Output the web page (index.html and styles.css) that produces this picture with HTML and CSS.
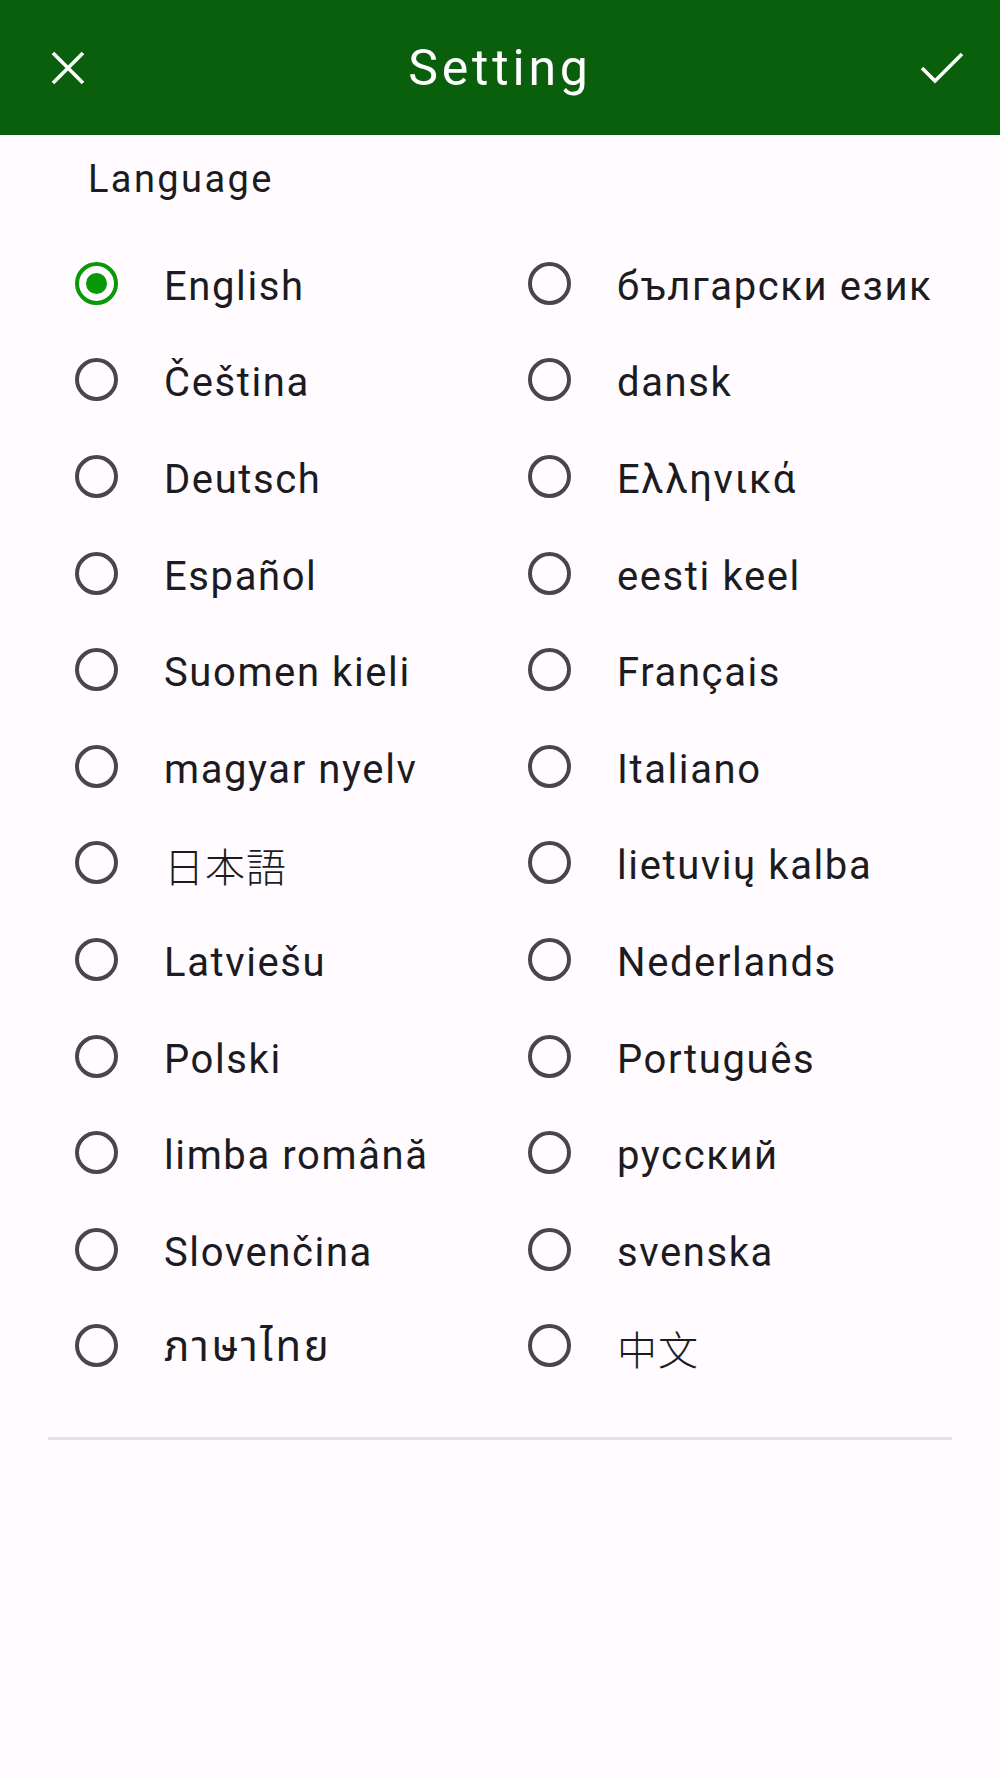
FILE: index.html
```html
<!DOCTYPE html>
<html lang="en">
<head>
<meta charset="utf-8">
<title>Setting</title>
<link rel="stylesheet" href="styles.css">
</head>
<body>
<header class="appbar">
  <button class="icon-btn close" aria-label="Close">
    <svg viewBox="0 0 34 34" width="34" height="34"><path d="M2 2 L32 32 M32 2 L2 32" stroke="#fff" stroke-width="3.6" fill="none"/></svg>
  </button>
  <h1 class="title">Setting</h1>
  <button class="icon-btn ok" aria-label="Save">
    <svg viewBox="0 0 44 34" width="44" height="34"><path d="M2 17 L15 30 L42 3" stroke="#fff" stroke-width="3.6" fill="none"/></svg>
  </button>
</header>
<main class="content">
  <div class="section-label">Language</div>
  <div class="lang-grid">
    <div class="opt"><span class="radio selected"></span><span class="name">English</span></div>
    <div class="opt"><span class="radio"></span><span class="name">български език</span></div>
    <div class="opt"><span class="radio"></span><span class="name">Čeština</span></div>
    <div class="opt"><span class="radio"></span><span class="name">dansk</span></div>
    <div class="opt"><span class="radio"></span><span class="name">Deutsch</span></div>
    <div class="opt"><span class="radio"></span><span class="name">Ελληνικά</span></div>
    <div class="opt"><span class="radio"></span><span class="name">Español</span></div>
    <div class="opt"><span class="radio"></span><span class="name">eesti keel</span></div>
    <div class="opt"><span class="radio"></span><span class="name">Suomen kieli</span></div>
    <div class="opt"><span class="radio"></span><span class="name">Français</span></div>
    <div class="opt"><span class="radio"></span><span class="name">magyar nyelv</span></div>
    <div class="opt"><span class="radio"></span><span class="name">Italiano</span></div>
    <div class="opt"><span class="radio"></span><span class="name cjk-jp" lang="ja">日本語</span></div>
    <div class="opt"><span class="radio"></span><span class="name">lietuvių kalba</span></div>
    <div class="opt"><span class="radio"></span><span class="name">Latviešu</span></div>
    <div class="opt"><span class="radio"></span><span class="name">Nederlands</span></div>
    <div class="opt"><span class="radio"></span><span class="name">Polski</span></div>
    <div class="opt"><span class="radio"></span><span class="name">Português</span></div>
    <div class="opt"><span class="radio"></span><span class="name">limba română</span></div>
    <div class="opt"><span class="radio"></span><span class="name">русский</span></div>
    <div class="opt"><span class="radio"></span><span class="name">Slovenčina</span></div>
    <div class="opt"><span class="radio"></span><span class="name">svenska</span></div>
    <div class="opt"><span class="radio"></span><span class="name thai" lang="th">ภาษาไทย</span></div>
    <div class="opt"><span class="radio"></span><span class="name cjk-sc" lang="zh-CN">中文</span></div>
  </div>
  <hr class="divider">
</main>
</body>
</html>
```
FILE: styles.css
```css
* { box-sizing: border-box; }
html, body {
  margin: 0;
  padding: 0;
  background: #fffbfe;
}
body {
  font-family: Roboto, "Noto Sans", "DejaVu Sans", "Noto Sans CJK SC", sans-serif;
  color: #1c1b1f;
  width: 1000px;
  min-height: 1778px;
}
.appbar {
  height: 135px;
  background: #0a5f0d;
  display: grid;
  grid-template-columns: 1fr auto 1fr;
  align-items: center;
}
.icon-btn {
  background: none;
  border: 0;
  padding: 0;
  display: flex;
  align-items: center;
  justify-content: center;
}
.icon-btn svg { display: block; }
.close {
  justify-self: start;
  margin-left: 51px;
}
.ok {
  justify-self: end;
  margin-right: 36px;
}
.title {
  margin: 0;
  font-family: Roboto, sans-serif;
  font-weight: 400;
  font-size: 50px;
  line-height: 58px;
  letter-spacing: 3.8px;
  color: #ffffff;
  padding-top: 0;
}
.content {
  display: flex;
  flex-direction: column;
}
.section-label {
  margin-top: 22px;
  padding-left: 88px;
  font-size: 38px;
  line-height: 44px;
  letter-spacing: 2.4px;
  color: #1c1b1f;
}
.lang-grid {
  margin-top: 34px;
  padding-left: 75px;
  display: grid;
  grid-template-columns: 453px 1fr;
  grid-auto-rows: 96.6px;
}
.opt {
  display: flex;
  align-items: center;
  gap: 46px;
}
.radio {
  flex: none;
  width: 43px;
  height: 43px;
  border-radius: 50%;
  border: 4.3px solid #49454f;
  display: flex;
  align-items: center;
  justify-content: center;
}
.radio.selected {
  border-color: #089808;
}
.radio.selected::after {
  content: "";
  width: 21.5px;
  height: 21.5px;
  border-radius: 50%;
  background: #089808;
}
.name {
  font-size: 40px;
  line-height: 47px;
  padding-top: 6px;
  letter-spacing: 1.6px;
  white-space: nowrap;
}
.cjk-jp {
  font-family: "Noto Sans CJK JP", sans-serif;
  font-weight: 300;
  letter-spacing: 1px;
}
.cjk-sc {
  font-family: "Noto Sans CJK SC", sans-serif;
  font-weight: 300;
  letter-spacing: 1px;
}
.thai {
  font-family: "Noto Sans Thai", "Noto Sans", "DejaVu Sans", sans-serif;
  font-size: 42px;
  letter-spacing: 2.5px;
}
.divider {
  margin: 43px 48px 0 48px;
  border: 0;
  height: 3px;
  background: #e4e2e6;
}
```
